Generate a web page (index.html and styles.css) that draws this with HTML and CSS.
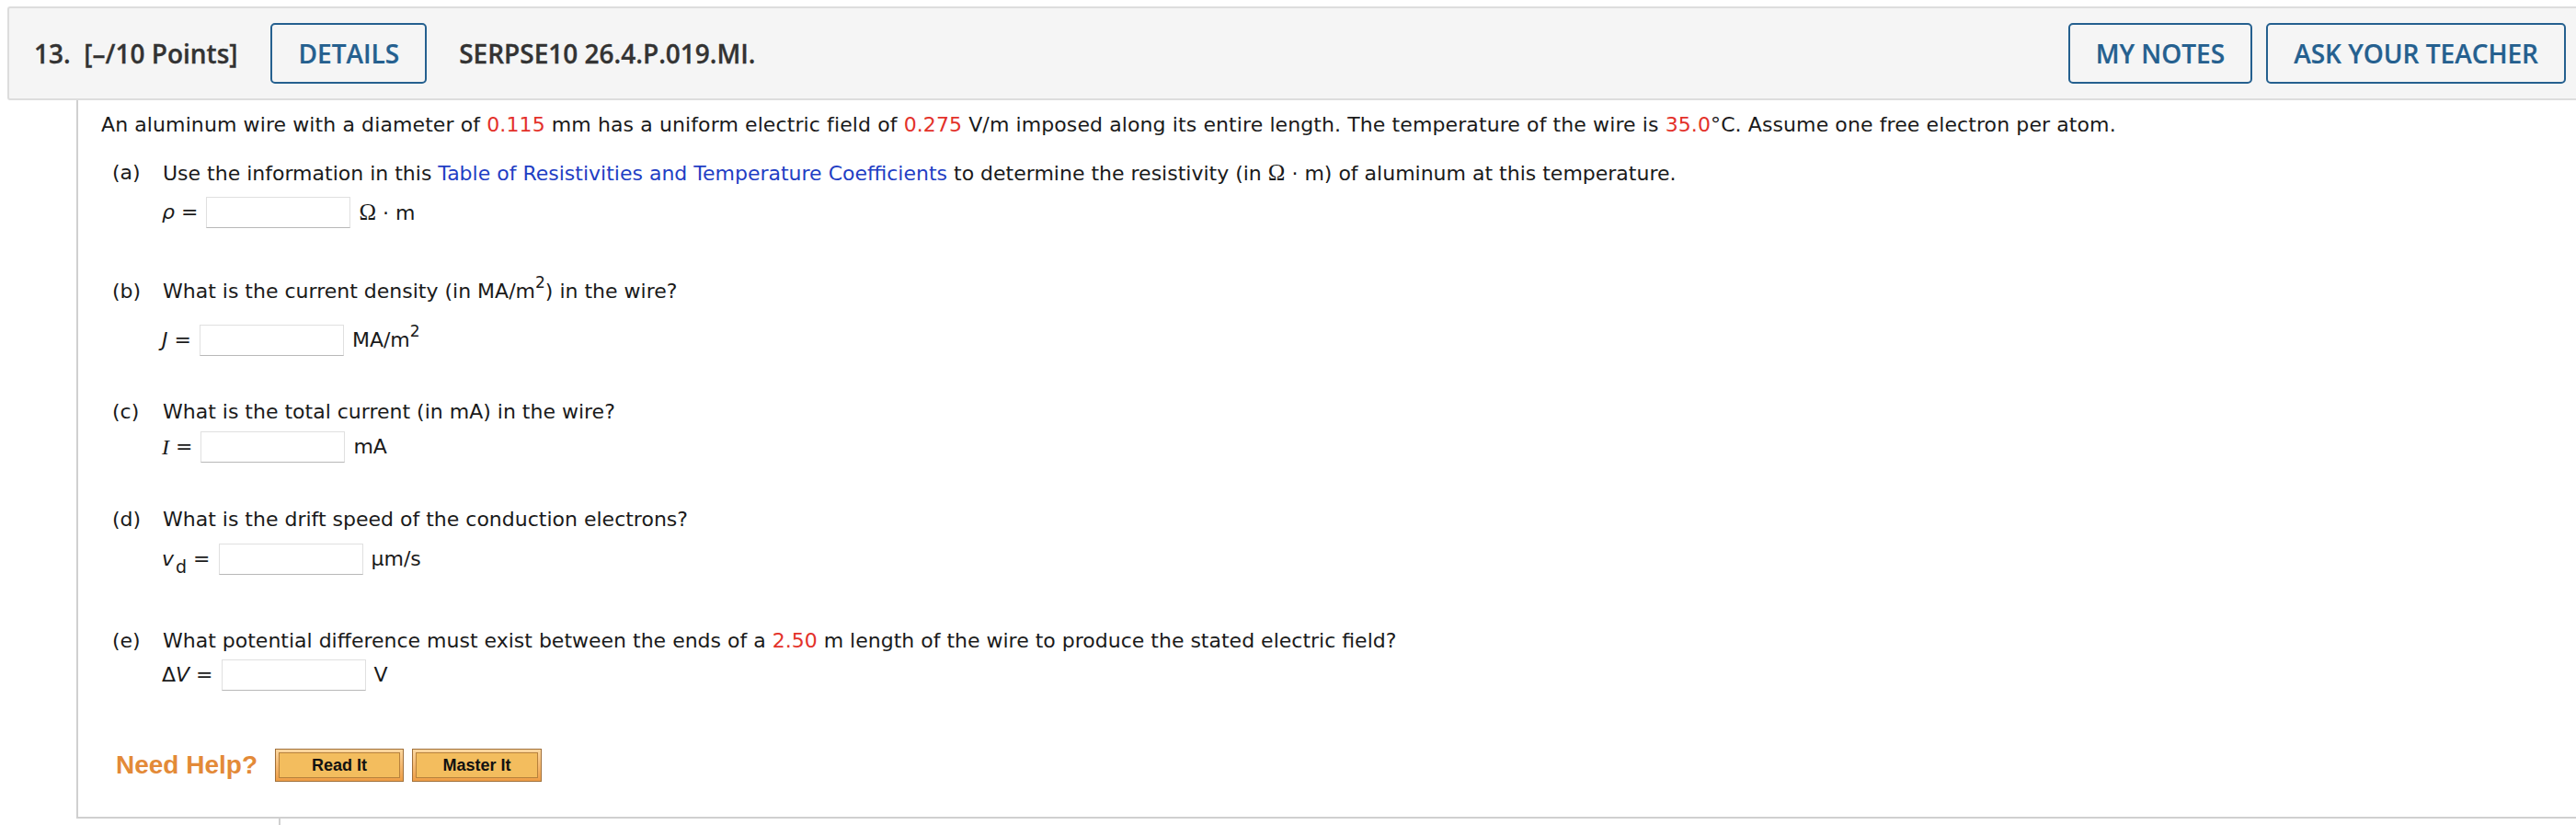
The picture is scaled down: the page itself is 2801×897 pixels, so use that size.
FILE: index.html
```html
<!DOCTYPE html>
<html>
<head>
<meta charset="utf-8">
<link rel="stylesheet" href="styles.css">
</head>
<body>
<div class="page">
  <div class="qhead">
    <div class="qnum">13.&nbsp;&nbsp;[–/10 Points]</div>
    <button class="hbtn">DETAILS</button>
    <div class="qcode">SERPSE10 26.4.P.019.MI.</div>
    <div class="spacer"></div>
    <button class="hbtn">MY NOTES</button>
    <button class="hbtn">ASK YOUR TEACHER</button>
  </div>
  <div class="qbody">
    <p class="intro">An aluminum wire with a diameter of <span class="red">0.115</span> mm has a uniform electric field of <span class="red">0.275</span> V/m imposed along its entire length. The temperature of the wire is <span class="red">35.0</span>°C. Assume one free electron per atom.</p>

    <div class="part pa">
      <div class="q"><span class="lbl">(a)</span><span>Use the information in this <a class="link">Table of Resistivities and Temperature Coefficients</a> to determine the resistivity (in <span class="omega">Ω</span> · m) of aluminum at this temperature.</span></div>
      <div class="ans a-a"><span class="var">ρ</span>&nbsp;=&nbsp;<span class="inp"></span><span class="unit"><span class="omega">Ω</span> · m</span></div>
    </div>

    <div class="part pb">
      <div class="q"><span class="lbl">(b)</span><span>What is the current density (in MA/m<sup>2</sup>) in the wire?</span></div>
      <div class="ans a-b"><span class="var">J</span>&nbsp;=&nbsp;<span class="inp"></span><span class="unit">MA/m<sup>2</sup></span></div>
    </div>

    <div class="part pc">
      <div class="q"><span class="lbl">(c)</span><span>What is the total current (in mA) in the wire?</span></div>
      <div class="ans a-c"><span class="var vi">I</span>&nbsp;=&nbsp;<span class="inp"></span><span class="unit">mA</span></div>
    </div>

    <div class="part pd">
      <div class="q"><span class="lbl">(d)</span><span>What is the drift speed of the conduction electrons?</span></div>
      <div class="ans a-d"><span class="var">v</span><sub>d</sub>&nbsp;=&nbsp;<span class="inp"></span><span class="unit">µm/s</span></div>
    </div>

    <div class="part pe">
      <div class="q"><span class="lbl">(e)</span><span>What potential difference must exist between the ends of a <span class="red">2.50</span> m length of the wire to produce the stated electric field?</span></div>
      <div class="ans a-e">Δ<span class="var">V</span>&nbsp;=&nbsp;<span class="inp"></span><span class="unit">V</span></div>
    </div>

    <div class="help">
      <span class="needhelp">Need Help?</span>
      <span class="hb w1"><span>Read It</span></span>
      <span class="hb w2"><span>Master It</span></span>
    </div>
  </div>
  <div class="qfoot"><div class="fcell"></div></div>
</div>
</body>
</html>
```

FILE: styles.css
```css
html, body { margin: 0; padding: 0; background: #fff; }
body { overflow: hidden; }
.page { padding: 7px 0 0 8px; }

.qhead {
  display: flex;
  align-items: center;
  height: 98px;
  background: #f5f5f5;
  border: 2px solid #dddddd;
  border-right: none;
  border-radius: 3px 0 0 3px;
  padding-left: 27px;
  padding-right: 11px;
  font-family: "Open Sans", sans-serif;
  font-weight: 600;
  font-size: 28px;
  color: #333333;
  -webkit-text-stroke: 0.3px #333333;
}
.qnum { margin-right: 36px; }
.qcode { margin-left: 35px; }
.spacer { flex: 1; }
.hbtn {
  font-family: "Open Sans", sans-serif;
  font-weight: 600;
  font-size: 28px;
  color: #25608f;
  background: transparent;
  border: 2px solid #25608f;
  border-radius: 5px;
  height: 66px;
  padding: 0 28px;
  margin: 0;
  -webkit-text-stroke: 0.2px #25608f;
}
.hbtn + .hbtn { margin-left: 15px; }

.qbody {
  margin-left: 75px;
  border-left: 2px solid #d0d0d0;
  border-bottom: 2px solid #d0d0d0;
  padding: 15px 0 38px 25px;
  font-family: "DejaVu Sans", Verdana, sans-serif;
  font-size: 22px;
  line-height: 24px;
  color: #1a1a1a;
}
.intro { margin: 0; letter-spacing: 0.1px; }
.red { color: #e3312a; }
.link { color: #1f3ec4; text-decoration: none; }
.omega { font-family: "Liberation Serif", "DejaVu Serif", serif; font-size: 25px; }

.q { display: flex; padding-left: 12px; }
.lbl { width: 55px; flex: none; }
.ans {
  display: flex;
  align-items: center;
  padding-left: 66px;
  height: 34px;
}
.var { font-style: italic; }
.vi { font-family: "Liberation Serif", serif; font-size: 24px; }
.inp {
  display: inline-block;
  width: 155px;
  height: 32px;
  border: 1px solid #e0e0e0;
  border-bottom-color: #b8b8b8;
  background: #fff;
  margin-left: 2px;
}
.unit { margin-left: 9px; }
sup { font-size: 17px; line-height: 0; position: relative; top: -3px; vertical-align: super; }
sub { font-size: 19px; line-height: 0; position: relative; top: 8px; vertical-align: baseline; margin-left: 2px; }

.pa { margin-top: 28px; }
.a-a { margin-top: 13px; }
.pb { margin-top: 57px; }
.a-b { margin-top: 24px; }
.pc { margin-top: 49px; }
.a-c { margin-top: 9px; }
.pd { margin-top: 50px; }
.a-d { margin-top: 14px; }
.pe { margin-top: 60px; }
.a-e { margin-top: 8px; }

.help {
  display: flex;
  align-items: center;
  margin-top: 63px;
  padding-left: 16px;
}
.needhelp {
  font-family: "Liberation Sans", Arial, sans-serif;
  font-weight: bold;
  font-size: 28px;
  color: #e38a38;
  margin-right: 19px;
}
.hb {
  display: inline-block;
  border: 1px solid #a0703a;
  background: linear-gradient(#fbd7a0, #ee9d45);
  padding: 3px;
}
.hb + .hb { margin-left: 9px; }
.hb span {
  display: block;
  border: 1px solid #b7813c;
  background: #f3bd5e;
  font-family: "Liberation Sans", Arial, sans-serif;
  font-weight: bold;
  font-size: 18px;
  line-height: 26px;
  color: #111;
  text-align: center;
}
.w1 span { width: 130px; }
.w2 span { width: 131px; }

.qfoot { margin-left: 75px; height: 10px; }
.fcell { width: 220px; height: 10px; border-right: 2px solid #d0d0d0; }
```
